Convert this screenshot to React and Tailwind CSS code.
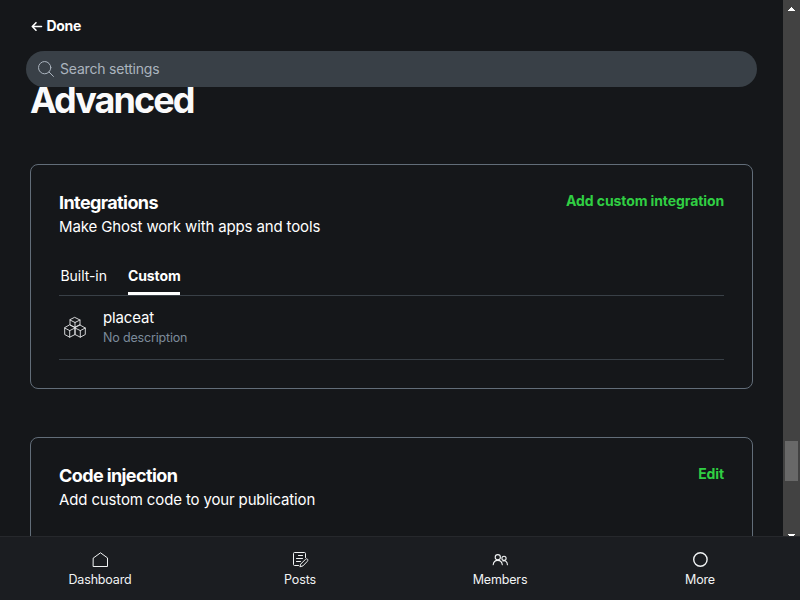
import React from 'react';

const icon = {
  fill: 'none',
  stroke: 'currentColor',
  strokeLinecap: 'round',
  strokeLinejoin: 'round',
};

function SearchIcon() {
  return (
    <svg viewBox="0 0 24 24" className="h-4 w-4 shrink-0 text-[#abb4be]" {...icon} strokeWidth="1.5">
      <circle cx="10" cy="10" r="9.2" />
      <path d="M16.6 16.6 23.2 23.2" />
    </svg>
  );
}

function BackIcon() {
  return (
    <svg viewBox="0 0 12 12" className="h-3 w-3 shrink-0" {...icon} strokeWidth="1.6">
      <path d="M5 2.700 1.300 6.500l3.700 3.700M1.500 6.500h9" />
    </svg>
  );
}

function CubesIcon() {
  return (
    <svg viewBox="0 0 24 24" className="h-6 w-6 text-[#e6e8ea]" {...icon} strokeWidth="0.9">
      <path d="m12 2.500 5 2.500v5l-5 2.500L7 10V5zM7 5l5 2.500L17 5M12 7.500v5" />
      <path d="M7 10 12 12.500v7l-5.300 2.700-5-2.700v-6.500zM1.700 13l5 2.600L12 13M6.700 15.600v6.600" />
      <path d="m17 10 5.300 3v6.500l-5 2.700-5.300-2.700v-7zM12 13l5.300 2.600 5-2.600M17.300 15.600v6.600" />
    </svg>
  );
}

function HomeIcon() {
  return (
    <svg viewBox="0 0 16 16" className="h-4 w-4" {...icon} strokeWidth="1">
      <path d="M1.500 5.900 8.500 .8l7 5.100v8.600h-14z" />
    </svg>
  );
}

function PostsIcon() {
  return (
    <svg viewBox="0 0 16 16" className="h-4 w-4 overflow-visible" {...icon} strokeWidth="1">
      <path d="M6.500 13.500h-4c-.6 0-1-.4-1-1v-11c0-.6.4-1 1-1h10c.6 0 1 .4 1 1v4M6.500 3.500h4M4.500 6.500h6M4.500 9.500h4" />
      <path d="m10.600 14-2.700.8.8-2.700 4.900-4.900c.5-.5 1.300-.5 1.900 0 .5.5.5 1.300 0 1.900z" />
    </svg>
  );
}

function MembersIcon() {
  return (
    <svg viewBox="0 0 16 16" className="h-4 w-4 overflow-visible" {...icon} strokeWidth="1.1">
      <circle cx="5.800" cy="5.200" r="2.600" />
      <circle cx="12" cy="6.300" r="2.100" />
      <path d="M1.200 12.700c.3-2.600 2-4.300 4.500-4.300s4.300 1.700 4.600 4.300M10.800 8.900c2.600-1.100 4.500.9 4.600 3.800" />
    </svg>
  );
}

function MoreIcon() {
  return (
    <svg viewBox="0 0 16 16" className="h-4 w-4" {...icon} strokeWidth="1.4">
      <circle cx="8.400" cy="7.500" r="6.700" />
    </svg>
  );
}

function CardHeader({ title, description, action }) {
  return (
    <div className="flex items-start justify-between">
      <div>
        <h5 className="text-[18px] leading-[21px] font-bold tracking-[-0.6px] text-white">{title}</h5>
        <p className="mt-[3px] text-[15px] leading-[22px] tracking-[-0.14px] text-white">{description}</p>
      </div>
      <button className="text-[14px] leading-[18px] font-bold tracking-[-0.1px] text-[#30cf43]">{action}</button>
    </div>
  );
}

const navItems = [
  { label: 'Dashboard', Icon: HomeIcon },
  { label: 'Posts', Icon: PostsIcon },
  { label: 'Members', Icon: MembersIcon },
  { label: 'More', Icon: MoreIcon },
];

export default function App() {
  return (
    <div className="flex h-[600px] w-[800px] flex-col overflow-hidden bg-[#15171a] font-['Inter',sans-serif] text-white">
      <div className="flex h-[536px] shrink-0 overflow-hidden">
        <div className="flex w-[783px] shrink-0 flex-col">
          <header className="z-10 flex h-[87px] shrink-0 flex-col pr-[26px] pl-[26px]">
            <button className="mt-[17px] ml-[5px] flex h-[18px] items-center gap-[3.5px] self-start text-[14px] leading-[18px] font-bold tracking-[-0.3px]">
              <BackIcon />
              <span>Done</span>
            </button>
            <div className="mt-4 flex h-9 items-center gap-[6px] rounded-full bg-[#394047] pl-3 text-[14px] leading-[20px] tracking-[-0.2px] text-[#abb4be]">
              <SearchIcon />
              <span>Search settings</span>
            </div>
          </header>
          <main className="flex flex-col pr-[30px] pl-[30px]">
            <h2 className="-mt-[9px] h-[44px] text-[36px] leading-[44px] font-bold tracking-[-1.95px] text-[#fafafb]">Advanced</h2>
            <section className="mt-[42px] h-[225px] shrink-0 rounded-lg border border-[#626d79] px-7 pt-[27px]">
              <CardHeader
                title="Integrations"
                description="Make Ghost work with apps and tools"
                action="Add custom integration"
              />
              <div className="mt-[25px] flex h-[33px] items-start gap-[20px] border-b border-[#394047] text-[14px] leading-[26px]">
                <button className="w-[49px] pl-[1.5px] text-left tracking-[-0.05px] whitespace-nowrap">Built-in</button>
                <button className="h-[32px] w-[52px] border-b-3 border-white pb-[3px] font-bold tracking-[-0.1px]">Custom</button>
              </div>
              <div className="flex h-[64px] items-start border-b border-[#394047] pl-1">
                <div className="mt-[19px]">
                  <CubesIcon />
                </div>
                <div className="mt-[11px] ml-4">
                  <div className="text-[15px] leading-[21px] tracking-[-0.14px]">placeat</div>
                  <div className="text-[12.5px] leading-[19px] tracking-[-0.17px] text-[#7c8b9a]">No description</div>
                </div>
              </div>
            </section>
            <section className="mt-12 h-[225px] shrink-0 rounded-lg border border-[#626d79] px-7 pt-[27px]">
              <CardHeader
                title="Code injection"
                description="Add custom code to your publication"
                action="Edit"
              />
            </section>
          </main>
        </div>
        <div className="flex w-[17px] shrink-0 flex-col items-center bg-[#424242]">
          <svg viewBox="0 0 7 4" className="mt-[7px] h-1 w-[7px] shrink-0" shapeRendering="crispEdges">
            <path d="M3 0h1v1h1v1h1v1h1v1H0V3h1V2h1V1h1z" fill="#fff" />
          </svg>
          <div className="mt-[430px] h-10 w-[13px] shrink-0 bg-[#686868]" />
          <svg viewBox="0 0 7 4" className="mt-[53px] h-1 w-[7px] shrink-0" shapeRendering="crispEdges">
            <path d="M0 0h7v1H6v1H5v1H4v1H3V3H2V2H1V1H0z" fill="#fff" />
          </svg>
        </div>
      </div>
      <nav className="grid h-16 grid-cols-4 border-t border-[#26282c] bg-[#1b1d21]">
        {navItems.map(({ label, Icon }) => (
          <a key={label} className="flex flex-col items-center pt-[15px] text-[12.5px] leading-[16px] tracking-[-0.15px] text-[#f1f3f4]">
            <Icon />
            <span className="mt-[4px]">{label}</span>
          </a>
        ))}
      </nav>
    </div>
  );
}
